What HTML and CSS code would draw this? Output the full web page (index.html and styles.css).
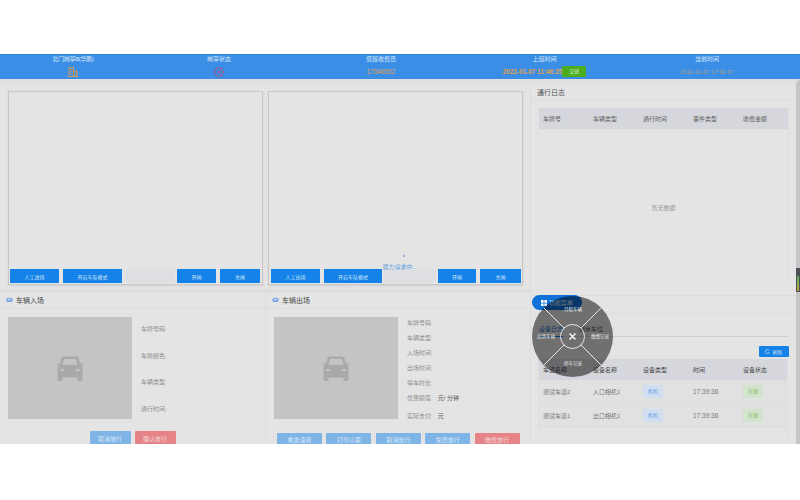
FILE: index.html
```html
<!DOCTYPE html>
<html lang="zh-CN">
<head>
<meta charset="utf-8">
<title>岗亭</title>
<link rel="stylesheet" href="styles.css">
</head>
<body>
<svg class="defs" width="0" height="0" aria-hidden="true">
  <symbol id="car" viewBox="0 0 26 26">
    <path fill="currentColor" fill-rule="evenodd" d="M6.500 1h13c1 0 1.700.5 2 1.500L23 8h2c.5 0 1 .4 1 1s-.5 1-1.500 1.200c.6.800 1 1.800 1 2.800v11c0 .8-.6 1.500-1.500 1.500h-2c-.9 0-1.500-.7-1.500-1.500V22H5.500v2c0 .8-.6 1.500-1.500 1.500H2c-.9 0-1.500-.7-1.500-1.500V13c0-1 .4-2 1-2.800C.5 10 0 9.500 0 9s.5-1 1-1h2l1.500-5.500C4.800 1.500 5.500 1 6.500 1zM7 3.500 5.600 9.500h14.800L19 3.500zM3 14c0 1.200 1.500 2 4.500 2v-1.500C6 13.500 3 13 3 14zm20 0c0-1-3-.5-4.500.5V16c3 0 4.500-.8 4.500-2z"/>
  </symbol>
  <symbol id="camcar" viewBox="0 0 12 10">
    <path fill="currentColor" d="M3.500 1h4.500c2 0 3.500 1.500 3.500 3.500S10 8.500 8 8.500H3.500C1.500 8.500.5 6.500.5 4.800S1.500 1 3.500 1z"/>
    <path fill="#dfe6f2" d="M3.500 3.200h4v2h-4z"/>
  </symbol>
</svg>
<div class="app">
  <header class="topbar">
    <div class="stat"><span class="stat-label tight">北门岗亭B(华鹏)</span><span class="stat-val">
      <svg viewBox="0 0 10 10" width="10" height="10"><path d="M1 9.500V.5h4.500v9M5.500 4h3.500v5.500M0 9.500h10M2.500 2.500h1.500M2.500 4.500h1.500M2.500 6.500h1.500M7 6h1M7 8h1" fill="none" stroke="#d79a52" stroke-width="1"/></svg></span></div>
    <div class="stat"><span class="stat-label">岗亭状态</span><span class="stat-val">
      <svg viewBox="0 0 10 10" width="10" height="10"><circle cx="5" cy="5" r="4.300" fill="none" stroke="#d23b62" stroke-width=".8"/><path d="M3.500 3.500l3 3M6.500 3.500l-3 3" stroke="#d23b62" stroke-width=".8"/></svg></span></div>
    <div class="stat"><span class="stat-label">值班收费员</span><span class="stat-val">17546552</span></div>
    <div class="stat"><span class="stat-label">上班时间</span><span class="stat-val strong">2022-01-07 11:46:25<span class="handover">交班</span></span></div>
    <div class="stat"><span class="stat-label">当前时间</span><span class="stat-val dim">2022-01-07 17:39:37</span></div>
  </header>
  <main class="content">
    <div class="left">
      <div class="cams">
        <section class="cam">
          <div class="cam-view"></div>
          <div class="cam-btns">
            <button class="btn b-a">人工进场</button><button class="btn b-b">开启车队模式</button><span class="cam-field"></span><button class="btn b-c">开闸</button><button class="btn b-d">关闸</button>
          </div>
        </section>
        <section class="cam cam-load">
          <div class="cam-view"></div>
          <div class="loading"><span class="dot"></span><span class="load-text">努力请求中...</span></div>
          <div class="cam-btns">
            <button class="btn b-a">人工出场</button><button class="btn b-b">开启车队模式</button><span class="cam-field"></span><button class="btn b-c">开闸</button><button class="btn b-d">关闸</button>
          </div>
        </section>
      </div>
      <div class="panels">
        <section class="panel p-in">
          <h3 class="panel-head"><svg class="head-ic"><use href="#camcar"/></svg>车辆入场</h3>
          <div class="panel-body">
            <div class="photo"><svg class="photo-car"><use href="#car"/></svg></div>
            <ul class="info info-in"><li>车牌号码:</li><li>车牌颜色:</li><li>车辆类型:</li><li>通行时间:</li></ul>
          </div>
          <div class="actions">
            <button class="act blue">取消放行</button><button class="act red">确认放行</button>
          </div>
        </section>
        <section class="panel p-out">
          <h3 class="panel-head"><svg class="head-ic"><use href="#camcar"/></svg>车辆出场</h3>
          <div class="panel-body">
            <div class="photo"><svg class="photo-car"><use href="#car"/></svg></div>
            <ul class="info info-out"><li>车牌号码:</li><li>车辆类型:</li><li>入场时间:</li><li>出场时间:</li><li>停车时长:</li><li>优惠额度:<b>元/ 分钟</b></li><li class="pay">实际支付:<b>元</b></li></ul>
          </div>
          <div class="actions out">
            <button class="act blue">重发语音</button><button class="act blue">打印小票</button><button class="act blue">取消放行</button><button class="act blue">免费放行</button><button class="act red">缴费放行</button>
          </div>
        </section>
      </div>
    </div>
    <aside class="right">
      <section class="log">
        <h3 class="log-head">通行日志</h3>
        <div class="log-table">
          <div class="log-row"><span>车牌号</span><span>车辆类型</span><span>通行时间</span><span>事件类型</span><span>收费金额</span></div>
          <div class="empty">暂无数据</div>
        </div>
      </section>
      <section class="devices">
        <div class="dev-bar"></div>
        <div class="tabs"><span class="tab-on">设备日志</span><span>剩余车位</span></div>
        <div class="refresh-row"><button class="refresh"><svg viewBox="0 0 8 8" width="5" height="5"><path d="M6.800 2.500A3.200 3.200 0 1 0 7.200 4.800" fill="none" stroke="#cfe4fa" stroke-width="1.200"/></svg>刷新</button></div>
        <div class="dev-table">
          <div class="dev-row dev-head"><span>车道名称</span><span>设备名称</span><span>设备类型</span><span>时间</span><span>设备状态</span></div>
          <div class="dev-row"><span>测试车道2</span><span>入口相机1</span><span><i class="tag tag-b">相机</i></span><span class="num">17:39:36</span><span><i class="tag tag-g">在线</i></span></div>
          <div class="dev-row"><span>测试车道1</span><span>出口相机1</span><span><i class="tag tag-b">相机</i></span><span class="num">17:39:36</span><span><i class="tag tag-g">在线</i></span></div>
        </div>
      </section>
    </aside>
  </main>
</div>
<div class="side-widget"><span></span></div>
<button class="menu-pill"><svg viewBox="0 0 8 8" width="6" height="6"><path fill="#fff" d="M0 0h3.500v3.500H0zM4.500 0H8v3.500H4.500zM0 4.500h3.500V8H0zM4.500 4.500H8V8H4.500z"/></svg>功能菜单</button>
<div class="wheel">
  <svg viewBox="0 0 81 81" width="81" height="81"><circle cx="40.500" cy="40.500" r="40.500" fill="#000" fill-opacity=".51"/><g stroke="#e8e8e8" stroke-width="1"><path d="M11.900 11.900 32 32M69.100 11.900 49 32M11.900 69.100 32 49M69.100 69.100 49 49"/></g><circle cx="40.500" cy="40.500" r="12" fill="none" stroke="#e8e8e8" stroke-width="1"/><path d="M37.500 37.500l6 6M43.500 37.500l-6 6" stroke="#f2f2f2" stroke-width="1.600"/></svg>
  <span class="w-t wt-top">月租车辆</span><span class="w-t wt-left">出场车辆</span><span class="w-t wt-right">缴费记录</span><span class="w-t wt-bot">停车记录</span>
</div>
</body>
</html>
```
FILE: styles.css
```css
* { box-sizing: border-box; }
html, body { margin: 0; padding: 0; }
body {
  width: 800px; height: 500px; overflow: hidden; background: #fff;
  font-family: "Liberation Sans", "Noto Sans CJK SC", sans-serif;
  padding-top: 54px; position: relative;
}
button { border: 0; font: inherit; padding: 0; }
.defs { position: absolute; }
.app { height: 390px; overflow: hidden; width: 800px; background: #e4e4e4; }

.topbar { height: 25px; background: #3a8ee6; border-top: 1px solid #2f86d8; display: grid; grid-template-columns: 146px 146px 178px 149px 181px; }
.stat { display: flex; flex-direction: column; align-items: center; }
.stat:last-child { padding-right: 5px; }
.stat-label { font-size: 6px; line-height: 8px; color: #dbe8f8; white-space: nowrap; }
.tight { letter-spacing: -.3px; }
.stat-val { font-size: 6.400px; height: 15px; margin-top: 1px; display: flex; align-items: center; color: #e0a24a; white-space: nowrap; }
.strong { font-weight: bold; }
.dim { color: #a9a287; font-size: 5.700px; }
.handover { display: block; background: #4cae1e; color: #dff2d0; width: 24px; height: 11px; line-height: 11px; text-align: center; font-size: 5px; font-weight: normal; border-radius: 1px; }

.content { display: flex; height: 365px; width: 800px; border-top: 4px solid #dfdfdf; border-right: 4px solid #c6c6c6; }
.left { width: 531px; border-right: 1px solid #dcdcdc; }
.cams { display: flex; gap: 5px; height: 209px; padding: 8px 0 0 8px; border-bottom: 3px solid #dcdcdc; }
.cam { flex: 0 0 255px; height: 194px; position: relative; border: 1px solid #c8c8c8; display: flex; flex-direction: column; box-shadow: 0 1px 2px #d0d0d0; }
.cam-view { flex: 1; }
.cam-btns { display: flex; height: 14px; margin-bottom: 1px; padding-left: 1px; }
.btn { background: #1482e8; color: #cfe4fa; font-size: 5px; height: 14px; }
.b-a { width: 49px; margin-right: 4px; }
.b-b { width: 59px; }
.cam-field { width: 50px; background: #dfe0e4; margin: 0 2px 0 3px; border-radius: 1px; }
.b-c { width: 39px; margin-right: 4px; }
.b-d { width: 40px; }
.cam-load .cam-btns { padding-left: 2px; }
.cam-load .b-b { width: 58px; }
.cam-load .cam-field { width: 52px; margin: 0 2px; }
.cam-load .b-c { width: 38px; }
.cam-load .b-d { width: 41px; }
.loading { position: absolute; left: 0; right: 0; top: 163px; padding-left: 9px; display: flex; flex-direction: column; align-items: center; z-index: 1; }
.dot { width: 2px; height: 2px; margin-left: 8px; border-radius: 50%; background: #6aa8e8; }
.load-text { color: #5f9fe0; font-size: 6px; margin-top: 6px; line-height: 8px; }

.panels { display: flex; height: 152px; }
.panel { background: #e4e4e4; }
.p-in { flex: 0 0 266px; border-right: 1px solid #dcdcdc; }
.p-out { flex: 1; }
.panel-head { margin: 0; height: 17px; border-bottom: 1px solid #dddddd; font-size: 7px; font-weight: normal; color: #444; padding-left: 6px; display: flex; align-items: center; gap: 3px; }
.head-ic { width: 7px; height: 6px; color: #7fa7e6; }
.panel-body { display: flex; padding: 8px 0 0 8px; height: 122px; }
.photo { width: 124px; height: 102px; background: #c4c4c4; border-radius: 1px; display: flex; align-items: center; justify-content: center; color: #a9a9a9; }
.photo-car { width: 26px; height: 27px; }
.info { list-style: none; margin: 0 0 0 9px; padding: 0; color: #8f8f8f; font-size: 6px; }
.info li { line-height: 8px; }
.info-in li { height: 26.700px; padding-top: 8px; }
.info-out li { height: 15px; padding-top: 2px; }
.info-out .pay { margin-top: 3px; }
.info b { font-weight: normal; color: #555; margin-left: 5px; }
.actions { display: flex; justify-content: center; gap: 4px; }
.act { width: 41px; height: 13px; font-size: 6px; line-height: 8px; padding-top: 2px; color: #d7e6f6; border-radius: 1px; }
.actions.out { justify-content: flex-start; gap: 4.400px; margin: 2px 0 0 11px; }
.actions.out .act { width: 45px; height: 11px; padding-top: 3px; }
.blue { background: #7fb4e6; }
.red { background: #e68387; color: #f3d6d8; }

.right { width: 265px; }
.log { height: 212px; }
.log-head { margin: 0; height: 18px; border-bottom: 1px solid #dedede; font-size: 7px; font-weight: normal; line-height: 19px; color: #555; padding-left: 6px; }
.log-table { margin: 7px 7px 0; border: 1px solid #e0e0e0; border-top: 0; height: 179px; display: flex; flex-direction: column; }
.log-row { height: 21px; background: #d6d7dd; display: grid; grid-template-columns: repeat(5, 50px); padding-left: 4px; align-items: center; font-size: 6px; color: #5f5f5f; }
.empty { flex: 1; display: flex; align-items: center; justify-content: center; color: #9a9a9a; font-size: 6px; }

.devices { border-top: 1px solid #dcdcdc; }
.dev-bar { height: 18px; border-bottom: 1px solid #dedede; }
.tabs { height: 23px; border-bottom: 1px solid #d0d0d0; margin: 0 8px 0 7px; display: flex; gap: 16px; align-items: flex-end; font-size: 6px; line-height: 8px; color: #555; padding-left: 1px; }
.tabs span { height: 12px; margin-bottom: -1px; }
.tab-on { color: #1f6fc0; border-bottom: 1px solid #1482e8; }
.refresh-row { display: flex; justify-content: flex-end; height: 11px; margin: 9px 7px 2px 0; }
.refresh { width: 30px; height: 11px; background: #1482e8; color: #cfe4fa; font-size: 5px; border-radius: 1px; display: flex; align-items: center; justify-content: center; gap: 2px; }
.dev-table { margin: 0 8px 0 7px; height: 90px; border: solid #e0e0e0; border-width: 0 1px; }
.dev-row { display: grid; grid-template-columns: repeat(5, 50px); height: 24px; align-items: center; border-bottom: 1px solid #dcdcdc; font-size: 6px; color: #777; padding-left: 4px; background: #e1e1e1; }
.dev-row span { height: 100%; display: flex; align-items: center; }
.dev-row .num { font-size: 6.500px; }
.dev-head { height: 21px; background: #d6d7dd; color: #444; border: 0; }
.tag { font-style: normal; display: block; width: 20px; height: 13px; line-height: 13px; text-align: center; font-size: 5px; border-radius: 1px; }
.tag-b { background: #cfdff1; color: #6aa0e0; }
.tag-g { background: #d2e3cb; color: #7fbb62; }

.side-widget { position: absolute; left: 796px; top: 268px; width: 4px; height: 24px; background: #4a4f58; padding: 8px 1px 1px; }
.side-widget span { display: block; height: 15px; background: linear-gradient(#5aa85a, #c5a93c); }
.wheel { position: absolute; left: 532px; top: 296px; width: 81px; height: 81px; }
.wheel svg { display: block; }
.w-t { position: absolute; font-size: 4.500px; color: #e8e8e8; line-height: 6px; white-space: nowrap; }
.wt-top { left: 32px; top: 11px; }
.wt-left { left: 5px; top: 38px; }
.wt-right { left: 59px; top: 38px; }
.wt-bot { left: 32px; top: 65px; }
.menu-pill { position: absolute; left: 532px; top: 295px; width: 50px; height: 15px; background: #1070d8; color: #cfe0f3; border-radius: 8px; font-size: 6px; display: flex; align-items: center; justify-content: center; gap: 2px; }
```
